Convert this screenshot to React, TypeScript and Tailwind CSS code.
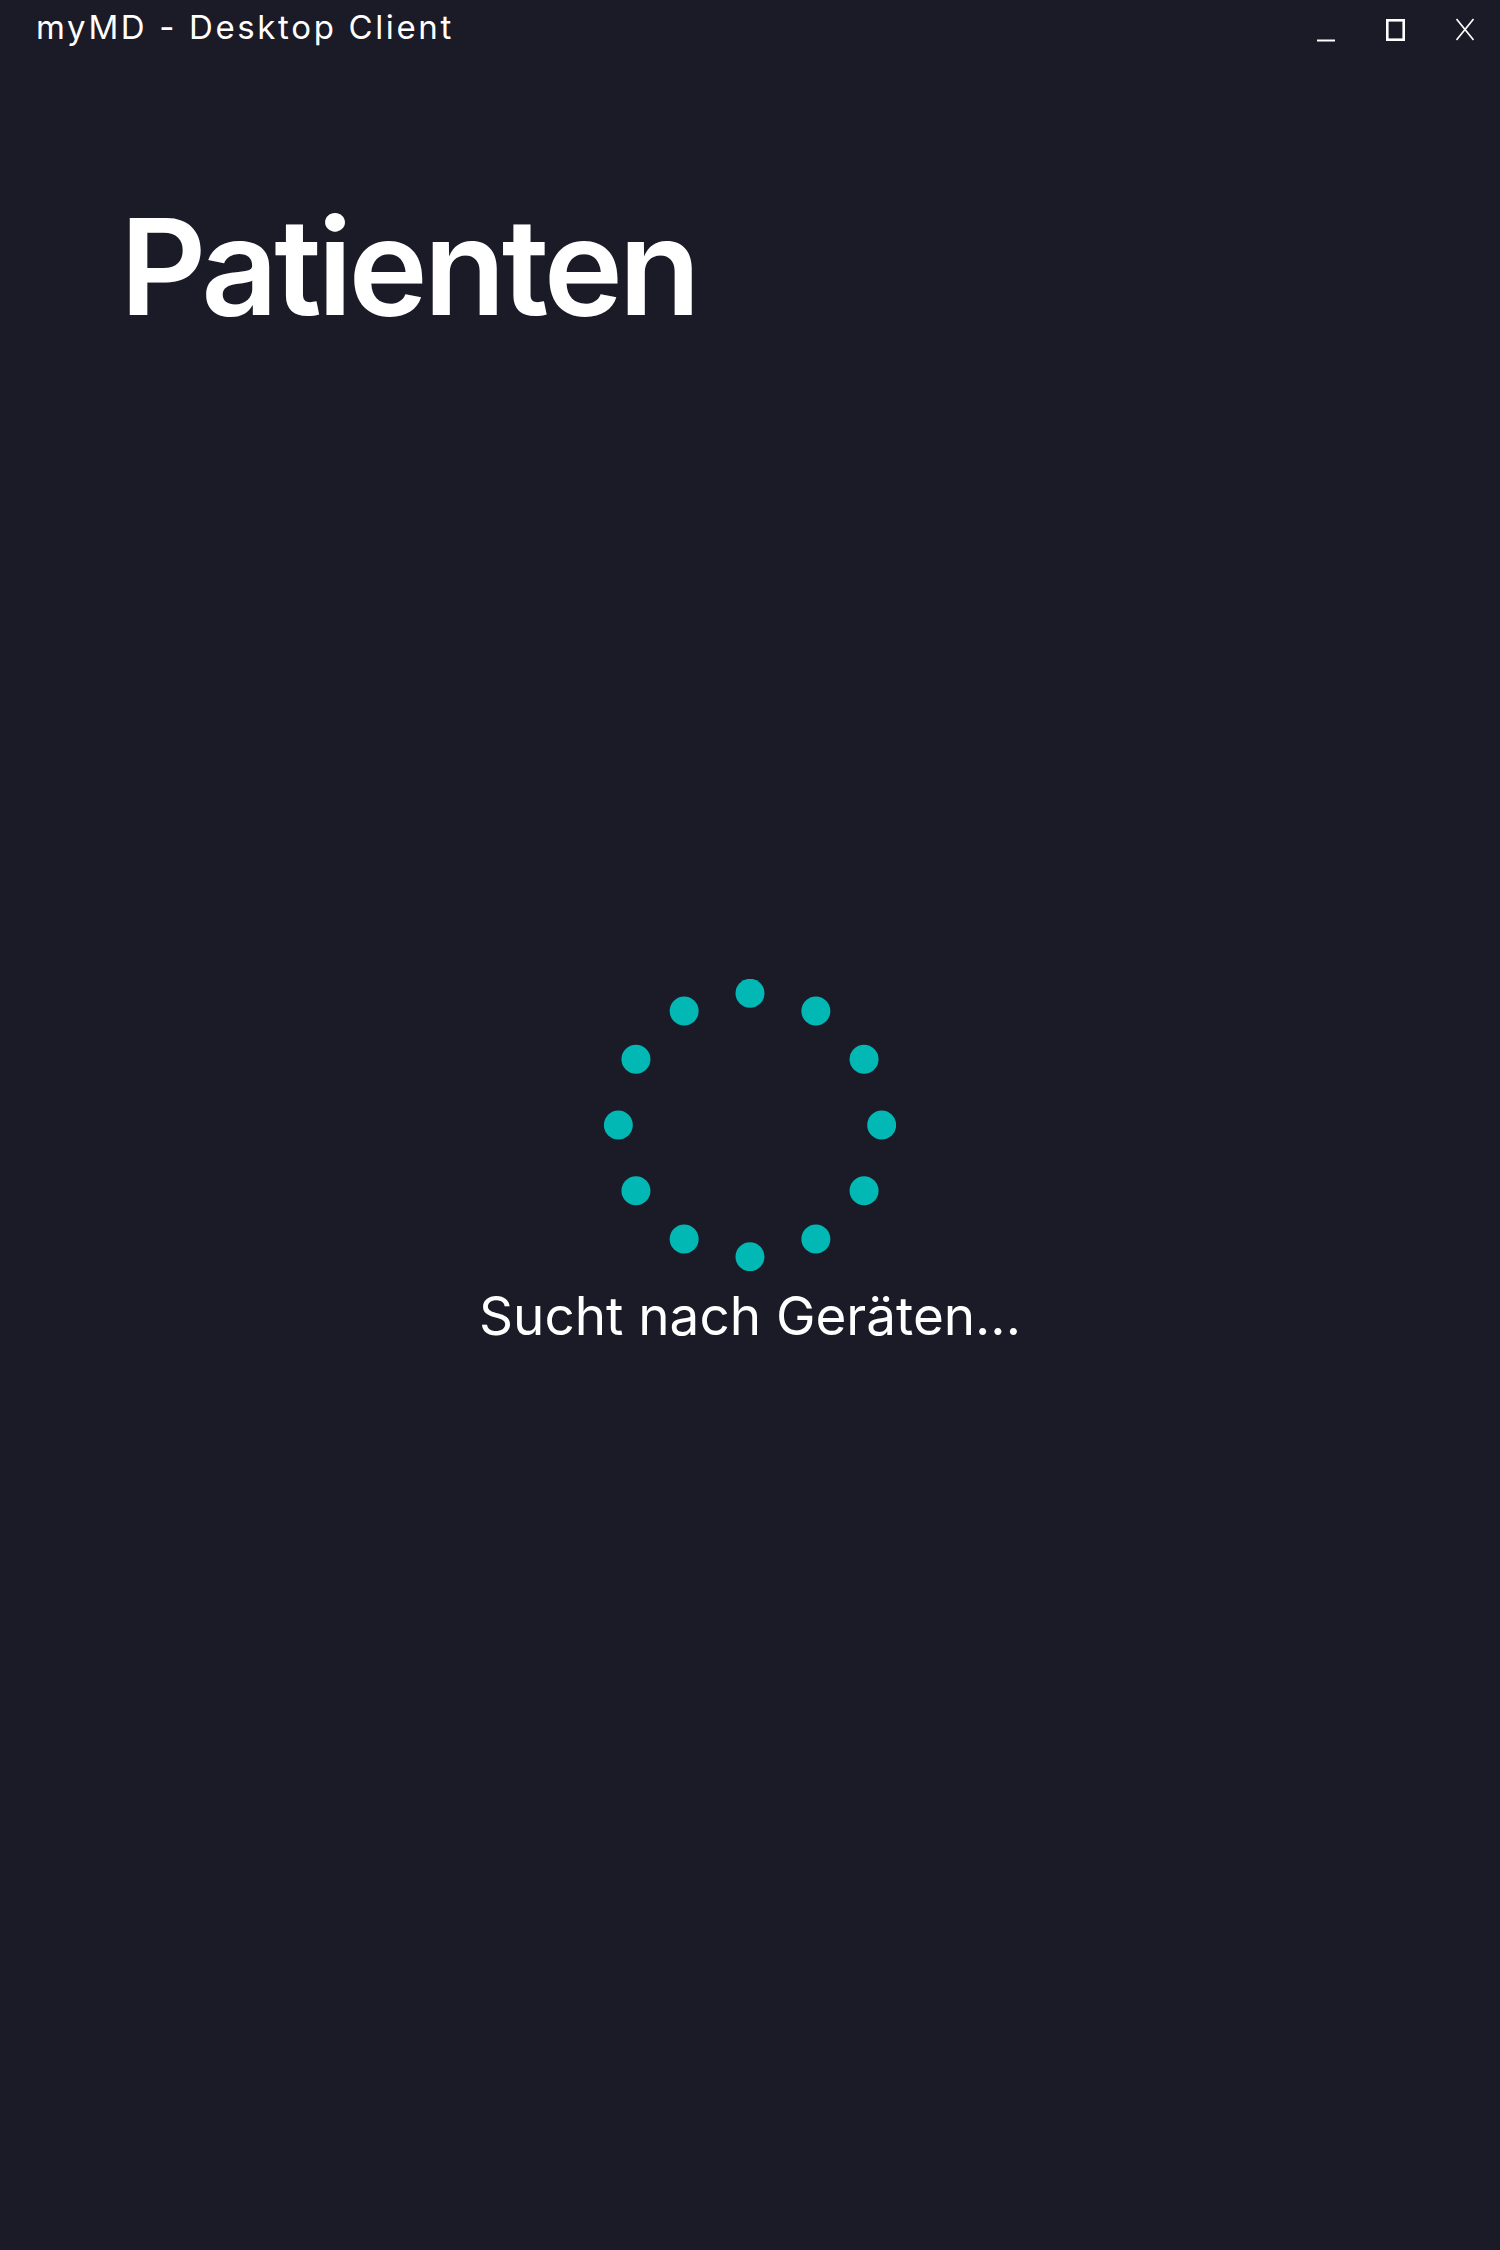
import React from 'react';

const DOTS = Array.from({ length: 12 }, (_, i) => {
  const a = (i * Math.PI) / 6;
  return { cx: 146 + 131.7 * Math.sin(a), cy: 146 - 131.7 * Math.cos(a) };
});

const WindowControls: React.FC = () => (
  <div className="flex items-start gap-[51px] pt-[8px]">
    <svg width="18" height="34" viewBox="0 0 18 34" className="text-white">
      <line x1="0" y1="32.5" x2="18" y2="32.5" stroke="currentColor" strokeWidth="2" />
    </svg>
    <svg width="19" height="34" viewBox="0 0 19 34" className="text-white">
      <rect x="1.3" y="12.3" width="16.4" height="19.4" fill="none" stroke="currentColor" strokeWidth="2.6" />
    </svg>
    <svg width="18" height="34" viewBox="0 0 18 34" className="text-white">
      <path d="M0.5 11 L17.5 32 M17.5 11 L0.5 32" stroke="currentColor" strokeWidth="1.6" fill="none" />
    </svg>
  </div>
);

const Spinner: React.FC = () => (
  <svg width="292" height="292" viewBox="0 0 292 292">
    {DOTS.map((d, i) => (
      <circle key={i} cx={d.cx} cy={d.cy} r="14.5" fill="#01b8b4" />
    ))}
  </svg>
);

export default function App() {
  return (
    <div
      className="flex h-[2250px] w-full flex-col bg-[#1b1a27] text-white"
      style={{ fontFamily: 'Inter, "Noto Sans", sans-serif' }}
    >
      <header className="flex h-[60px] items-start justify-between pl-[36px] pr-[26px]">
        <span className="pt-[11px] text-[33px] leading-none font-normal tracking-[0.08em]">
          myMD - Desktop Client
        </span>
        <WindowControls />
      </header>

      <h1 className="mt-[139px] pl-[120px] text-[134px] leading-none font-semibold tracking-[-0.03em]">
        Patienten
      </h1>

      <div className="mt-[646px] flex flex-col items-center">
        <Spinner />
        <p className="mt-[19px] text-[53px] leading-none font-normal">Sucht nach Geräten...</p>
      </div>
    </div>
  );
}
